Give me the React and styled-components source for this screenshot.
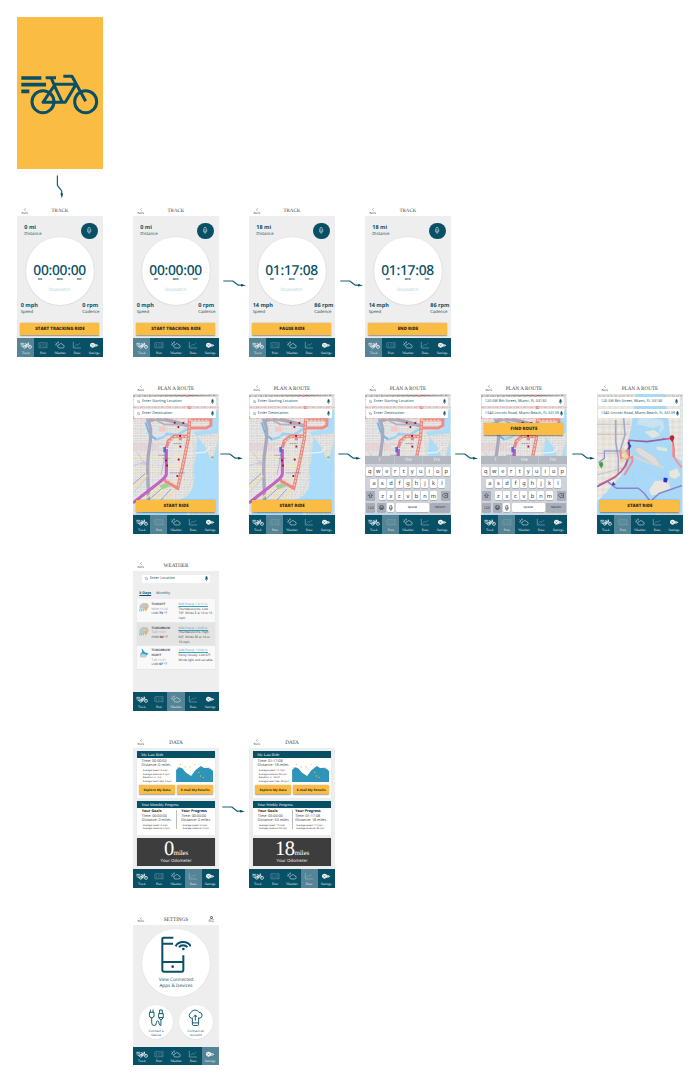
import React from "react";
import styled, { createGlobalStyle } from "styled-components";

const teal = "#085066";
const yellow = "#fbbc43";
const sans = '"Open Sans", "Noto Sans", sans-serif';
const serif = '"Liberation Serif", serif';

const Global = createGlobalStyle`
  body { margin: 0; background: #fff; font-family: ${sans}; color: ${teal}; text-rendering: geometricPrecision; }
  * { box-sizing: border-box; }
  svg { display: block; flex: none; }
`;

/* ---------- board ---------- */
const Board = styled.main`
  width: 697px;
  height: 1082px;
  padding: 17.3px 0 0 17.3px;
  overflow: hidden;
  display: flex;
  flex-direction: column;
  align-items: flex-start;
`;
const Splash = styled.section`
  width: 85.4px;
  height: 151.7px;
  flex: none;
  padding-top: 3px;
  background: ${yellow};
  display: flex;
  align-items: center;
  justify-content: center;
`;
const DownArrow = styled.div`
  width: 85.4px;
  height: 36.3px;
  flex: none;
`;
const FlowRow = styled.section`
  display: flex;
  flex: none;
  height: 151.7px;
  margin-bottom: ${(p) => p.$after ?? 25.3}px;
  margin-left: ${(p) => p.$indent || 0}px;
`;
const Link = styled.div`
  width: 30.6px;
  height: 151.7px;
  padding: ${(p) => p.$y || 74}px 0 0 ${(p) => p.$x || 4}px;
  overflow: visible;
`;

/* ---------- phone ---------- */
const Phone = styled.article`
  width: 85.4px;
  height: 151.7px;
  flex: none;
  display: flex;
  flex-direction: column;
  overflow: hidden;
  background: #fff;
`;
const Header = styled.header`
  height: ${(p) => p.$h || 11}px;
  flex: none;
  display: grid;
  grid-template-columns: 15px 1fr 15px;
  align-items: center;
  font-family: ${serif};
  color: #666;
`;
const Back = styled.span`
  display: flex;
  flex-direction: column;
  align-items: center;
  gap: 0.3px;
  font-size: 3.2px;
  line-height: 3.7px;
  padding-top: 2px;
  color: #333;
`;
const Title = styled.h1`
  margin: 0;
  padding-top: 2.4px;
  font-size: ${(p) => p.$size || 5}px;
  line-height: 7px;
  font-weight: 400;
  text-align: center;
  white-space: nowrap;
  color: #404040;
`;
const Body = styled.div`
  position: relative;
  flex: 1;
  min-height: 0;
  overflow: hidden;
  background: #eeeeee;
  display: flex;
  flex-direction: column;
`;
const Nav = styled.nav`
  height: 18.8px;
  flex: none;
  display: grid;
  grid-template-columns: repeat(5, 1fr);
  background: ${teal};
`;
const NavItem = styled.div`
  display: flex;
  flex-direction: column;
  align-items: center;
  padding-top: 3.2px;
  font: 3.4px/4px ${serif};
  color: #e4edf0;
  background: ${(p) => (p.$on ? "#548495" : "transparent")};
  gap: 1.2px;
`;
const YellowButton = styled.div`
  width: ${(p) => p.$w || 79}px;
  height: ${(p) => p.$h || 12.2}px;
  flex: none;
  display: flex;
  align-items: center;
  justify-content: center;
  padding-top: 0.5px;
  background: ${yellow};
  color: #352c1c;
  border-radius: ${(p) => p.$r || 0.5}px;
  box-shadow: 0 0.3px 1.5px rgba(0, 0, 0, 0.4);
  font-size: ${(p) => p.$size || 4.4}px;
  font-weight: ${(p) => p.$weight || 800};
  white-space: nowrap;
`;

/* ---------- track ---------- */
const TrackTop = styled.div`
  height: 20.7px;
  padding: 6.4px 4.9px 0 7px;
  display: flex;
  justify-content: space-between;
`;
const Stat = styled.div`
  width: ${(p) => p.$w || "auto"};
  white-space: nowrap;
  font-size: 4.3px;
  line-height: 7.6px;
  b { display: block; font-size: 5.5px; line-height: 8px; }
`;
const MicButton = styled.div`
  width: 16.6px;
  height: 16.6px;
  border-radius: 50%;
  background: ${teal};
  display: flex;
  align-items: center;
  justify-content: center;
`;
const Dial = styled.div`
  width: 68px;
  height: 68px;
  margin: 0 0 0 8.3px;
  border-radius: 50%;
  background: #fff;
  box-shadow: 0 0.3px 1.5px rgba(0, 0, 0, 0.18);
  display: flex;
  flex-direction: column;
  align-items: center;
  padding-top: 26.8px;
  flex: none;
`;
const Clock = styled.div`
  font: 500 13.8px/14px "Noto Sans", sans-serif;
  letter-spacing: -0.28px;
  white-space: nowrap;
`;
const Units = styled.div`
  display: grid;
  grid-template-columns: repeat(3, 19.6px);
  text-align: center;
  font-size: 2.8px;
  line-height: 3px;
  font-weight: 700;
  margin-top: 0.4px;
`;
const Caption = styled.div`
  font-size: 4.5px;
  line-height: 6px;
  margin-top: 5.4px;
  color: #b3d2d8;
`;
const TrackBottom = styled.div`
  display: flex;
  padding: 0 0 0 3.4px;
  margin-top: -4.3px;
  height: 22.4px;
`;
const CenterRow = styled.div`
  display: flex;
  justify-content: center;
`;

/* ---------- plan ---------- */
const MapLayer = styled.div`
  position: absolute;
  inset: 0;
`;
const Over = styled.div`
  position: relative;
  flex: 1;
  display: flex;
  flex-direction: column;
  align-items: center;
  padding-top: 3px;
`;
const Search = styled.div`
  width: ${(p) => p.$w || 81.8}px;
  height: ${(p) => p.$h || 9.2}px;
  flex: none;
  align-self: flex-start;
  margin: 0 0 ${(p) => p.$mb ?? 2.8}px 1px;
  padding: 0 2px 0 2.6px;
  display: flex;
  align-items: center;
  gap: 1.4px;
  border-radius: 1.2px;
  background: #fff;
  font-size: 3.75px;
  white-space: nowrap;
  span { flex: 1; }
`;
const Keyboard = styled.div`
  position: absolute;
  left: 0;
  right: 0;
  bottom: 0.9px;
  height: 58.4px;
  background: #ced2d9;
  display: flex;
  flex-direction: column;
  align-items: center;
`;
const Suggest = styled.div`
  width: 100%;
  height: 8.8px;
  display: grid;
  grid-template-columns: repeat(3, 1fr);
  align-items: center;
  text-align: center;
  background: #b2b7c0;
  color: #f3f4f6;
  font: 4.4px/8px "Noto Sans", sans-serif;
  margin-bottom: 2.9px;
  span + span { border-left: 0.3px solid #c0c4cc; }
`;
const KeyRow = styled.div`
  width: 83.4px;
  display: flex;
  justify-content: ${(p) => (p.$spread ? "space-between" : "center")};
  gap: ${(p) => (p.$spread ? 0 : 1.5)}px;
  margin-bottom: 2.9px;
`;
const Keys = styled.div`
  display: flex;
  gap: 1.5px;
`;
const Key = styled.div`
  width: ${(p) => p.$w || 7}px;
  height: 9.3px;
  border-radius: 1px;
  background: ${(p) => (p.$dark ? "#a7adb9" : "#fff")};
  box-shadow: 0 0.4px 0 #8b8f96;
  color: #303030;
  display: flex;
  align-items: center;
  justify-content: center;
  font: ${(p) => p.$size || 5.6}px/8px "Noto Sans", sans-serif;
`;
const BottomAction = styled.div`
  margin-top: auto;
  margin-bottom: 2.9px;
`;
const FindAction = styled.div`
  margin-top: 2.2px;
`;

/* ---------- weather ---------- */
const WeatherSearch = styled.div`
  display: flex;
  padding: 4px 0 0 8px;
`;
const Tabs = styled.div`
  display: flex;
  gap: 4.9px;
  padding-left: 6px;
  font-size: 3.65px;
  line-height: 6px;
  margin: 8px 0 2.1px;
  u { font-weight: 700; }
`;
const Forecasts = styled.div`
  width: 78px;
  margin-left: 4px;
  background: #f9f9f9;
  box-shadow: 0 0.3px 1px rgba(0, 0, 0, 0.15);
`;
const Forecast = styled.div`
  height: ${(p) => p.$h}px;
  display: grid;
  grid-template-columns: 12.3px 26.9px 1fr;
  padding: 2.8px 0 0 2px;
  background: ${(p) => (p.$shade ? "#e4e4e4" : "transparent")};
  border-bottom: 0.5px solid #e8e8e8;
  color: #383838;
  font-size: 3.05px;
  line-height: 4.65px;
  white-space: pre;
  i { font-style: normal; color: #929292; }
`;
const Day = styled.div`
  em { font-style: normal; font-weight: 600; }
`;
const Rain = styled.div`
  font-size: 3.05px;
  u { color: #36a0bd; }
`;

/* ---------- data ---------- */
const Cards = styled.div`
  display: flex;
  flex-direction: column;
  gap: 3.1px;
  padding: 3.4px 3.7px 0 3.9px;
`;
const Card = styled.section`
  height: ${(p) => p.$h}px;
  flex: none;
  background: #fff;
  box-shadow: 0 0.2px 1px rgba(0, 0, 0, 0.2);
`;
const CardTitle = styled.h2`
  margin: 0;
  height: 7.3px;
  padding-left: 4px;
  background: ${teal};
  color: #fff;
  font: 400 4px/7.6px ${serif};
`;
const CardRow = styled.div`
  display: flex;
  justify-content: space-between;
  padding: ${(p) => p.$pad};
`;
const Facts = styled.div`
  color: #333;
  font-size: 3.7px;
  line-height: 4.1px;
  white-space: pre;
  padding-top: 0.5px;
  p { margin: 0; }
  small { display: block; font-size: 2.4px; line-height: 3.4px; padding: 1px 0 0 1.2px; }
  b { color: #222; }
`;
const ChartBox = styled.div`
  padding-top: 2.2px;
`;
const Rule = styled.div`
  width: 0.4px;
  height: 19.5px;
  background: #bdbdbd;
`;
const Odometer = styled.section`
  height: 27.6px;
  flex: none;
  background: #3d3d3d;
  color: #fff;
  box-shadow: 0 0.3px 1px rgba(0, 0, 0, 0.35);
  display: flex;
  flex-direction: column;
  align-items: center;
  padding-top: 4px;
`;
const Miles = styled.div`
  height: 15.5px;
  font: 20.5px/15.5px ${serif};
  letter-spacing: -0.6px;
  small { font-size: 7px; line-height: 0; letter-spacing: -0.1px; }
`;
const OdoLabel = styled.div`
  font-size: 4.3px;
  line-height: 6px;
`;

/* ---------- settings ---------- */
const Bubble = styled.div`
  width: ${(p) => p.$d}px;
  height: ${(p) => p.$d}px;
  flex: none;
  border-radius: 50%;
  background: #fff;
  box-shadow: 0 0.3px 1px rgba(0, 0, 0, 0.13);
  display: flex;
  flex-direction: column;
  align-items: center;
  padding-top: ${(p) => p.$pt}px;
  gap: ${(p) => p.$gap}px;
  text-align: center;
  white-space: pre;
  font-size: ${(p) => p.$size}px;
  line-height: ${(p) => p.$lh}px;
`;
const SettingsTop = styled.div`
  display: flex;
  justify-content: center;
  padding-top: 4.3px;
`;
const Pair = styled.div`
  display: flex;
  justify-content: center;
  gap: 6px;
  margin-top: 8.2px;
`;
const Help = styled.div`
  display: flex;
  flex-direction: column;
  align-items: center;
  padding-top: 1px;
  font-size: 2.9px;
  line-height: 3.3px;
  color: #333;
`;

/* ---------- drawings ---------- */
const Bike = () => (
  <svg width="78" height="42" viewBox="0 0 234 126" fill="none" stroke={teal} strokeWidth="9">
    <path d="M1 12H61M1 32H75M1 52H25" strokeWidth="11" />
    <circle cx="66" cy="83" r="33" />
    <circle cx="194" cy="83" r="33" />
    <path d="M74 11H105M90 11L99 31H163M101 33L66 85H133L166 29M100 35L123 83M127 7H153L194 82" strokeLinejoin="round" />
  </svg>
);
const Connector = () => (
  <svg width="24" height="8" viewBox="0 0 24 8" fill="none" stroke="#176078" strokeWidth="1.2" strokeLinejoin="round">
    <path d="M0.3 2H9.8L15.3 6.2H20" />
    <path d="M18 4.9L23 6.4L18 7.6Z" fill={teal} stroke="none" />
  </svg>
);
const Mic = ({ h = 5, color = teal }) => (
  <svg width={h * 0.6} height={h} viewBox="0 0 12 20" fill="none" stroke={color}>
    <rect x="2.4" y="1" width="7.2" height="11" rx="3" fill={color} stroke="none" />
    <path d="M1 8V10a5 5 0 0 0 10 0V8M6 15V19" strokeWidth="2.4" />
  </svg>
);
const MicOutline = ({ h = 7, color = "#c4d7dd" }) => (
  <svg width={h * 0.6} height={h} viewBox="0 0 12 20" fill="none" stroke={color} strokeWidth="2">
    <rect x="3" y="1" width="6" height="12" rx="3" />
    <path d="M1 7V11a5 5 0 0 0 10 0V7M6 16V20" strokeWidth="1.7" />
  </svg>
);
const Lens = () => (
  <svg width="3.6" height="3.6" viewBox="0 0 12 12" fill="none" stroke="#43798a" strokeWidth="1.5">
    <circle cx="4.6" cy="4.6" r="3.4" />
    <path d="M7 7L11 11" />
  </svg>
);
const navIcons = {
  Track: (
    <g fill="none" stroke="#fff" strokeWidth="1.8">
      <path d="M1 6H10M1 10H11M4 14H8" />
      <circle cx="12.5" cy="15" r="3.6" />
      <circle cx="26" cy="15" r="4" />
      <path d="M12 7H16L18 15H12L17 8H22L26 15M20 5H23L18 15" />
    </g>
  ),
  Plan: (
    <g fill="none" stroke="#8eb0bb" strokeWidth="1.2">
      <path d="M5 5L11 4L19 5L26 4V18L19 17L11 18L5 17Z" />
      <path d="M8 9L11 11M14 8L17 11M22 8L19 11M8 14L11 13M14 14L17 13M20 15L24 12" />
    </g>
  ),
  Weather: (
    <g fill="none" stroke="#eaf1f3" strokeWidth="1.4">
      <path d="M13 18H22a4 4 0 0 0 1-8a5 5 0 0 0-9-1a4.6 4.6 0 0 0-1 9Z" />
      <path d="M8 12A4 4 0 0 1 13 5M11 1V3M4 4L6 6M3 10H5" />
    </g>
  ),
  Data: (
    <g fill="none" stroke="#b2c9d1" strokeWidth="1.3">
      <path d="M6 2V18H26" />
      <path d="M9 14L14 9L18 11L24 5" strokeDasharray="3 1" />
    </g>
  ),
  Settings: (
    <g fill="#fff">
      <circle cx="12" cy="11" r="6.5" />
      <path d="M17 8H22L27 11L22 14H17Z" />
      <g fill="none" stroke={teal} strokeWidth="1.1">
        <path d="M8.5 8L15 14M8.5 14L15 8M18 11H24" />
      </g>
    </g>
  ),
};
const NavBar = ({ active }) => (
  <Nav>
    {Object.keys(navIcons).map((name) => (
      <NavItem key={name} $on={name === active}>
        <svg width="11.5" height="8.2" viewBox="0 0 30 21">{navIcons[name]}</svg>
        {name}
      </NavItem>
    ))}
  </Nav>
);

const Screen = ({ title, size, active, headH, right, children }) => (
  <Phone>
    <Header $h={headH}>
      <Back>
        <svg width="2" height="3" viewBox="0 0 6 9" fill="none" stroke="#555" strokeWidth="1.4"><path d="M4.5 1L1.5 4.5L4.5 8" /></svg>
        Back
      </Back>
      <Title $size={size}>{title}</Title>
      {right}
    </Header>
    <Body>{children}</Body>
    <NavBar active={active} />
  </Phone>
);

const Track = ({ miles, time, mph, rpm, action }) => (
  <Screen title="TRACK" size={5} active="Track">
    <TrackTop>
      <Stat><b>{miles} mi</b>Distance</Stat>
      <MicButton><MicOutline /></MicButton>
    </TrackTop>
    <Dial>
      <Clock>{time}</Clock>
      <Units><span>HR</span><span>MIN</span><span>SEC</span></Units>
      <Caption>Stopwatch</Caption>
    </Dial>
    <TrackBottom>
      <Stat $w="61.6px"><b>{mph} mph</b>Speed</Stat>
      <Stat><b>{rpm} rpm</b>Cadence</Stat>
    </TrackBottom>
    <CenterRow><YellowButton>{action}</YellowButton></CenterRow>
  </Screen>
);

const dots = [[149, 133], [175, 134], [160, 146], [165, 173], [166, 205], [161, 244], [123, 247], [126, 262], [157, 293]];
const CityMap = () => (
  <svg width="100%" height="100%" viewBox="24 47 256 364" preserveAspectRatio="none">
    <defs>
      <pattern id="streets" width="26" height="22" patternUnits="userSpaceOnUse">
        <rect width="26" height="22" fill="#dcdad9" />
        <path d="M0 1H26M0 7H26M0 15H26" stroke="#f5f3f1" strokeWidth="1.7" />
        <path d="M2 0V22M9 0V22M17 0V22" stroke="#efedec" strokeWidth="1.6" />
        <path d="M4 4H7M10 11H14M19 4H23M3 19H8M20 18H24" stroke="#c0bdc0" strokeWidth="2" />
        <path d="M12 3H15M4 10V13" stroke="#c9d8c2" strokeWidth="2" />
      </pattern>
    </defs>
    <rect x="24" y="47" width="256" height="364" fill="url(#streets)" />
    <path d="M262 120L259 153L205 160L217 178L210 245L204 275L208 300L203 330L188 352L160 368L112 382L24 411H280V90Z" fill="#abdcf9" />
    <path d="M62 132L74 170L93 183L112 178L126 166L158 170L190 150" fill="none" stroke="#9fd2f0" strokeWidth="8" />
    <path d="M62 132L74 170L93 183" fill="none" stroke="#69a8e6" strokeWidth="3" />
    <path d="M214 172L280 166V182L262 247L256 240L240 204Z" fill="url(#streets)" stroke="#dcd9cc" strokeWidth="2" />
    <path d="M186 226L240 222L256 205" fill="none" stroke="#e8eef2" strokeWidth="4" />
    <path d="M200 186L210 200L202 300L182 348" fill="none" stroke="#d5dccf" strokeWidth="3" />
    <path d="M90 150C110 130 126 150 118 172L98 178Z" fill="#dbe3ea" />
    <path d="M102 145H122V160H102ZM50 250H62V262H50Z" fill="#f4c9c4" />
    <path d="M24 198H118M24 213H120M24 205H100" stroke="#f0b9bd" strokeWidth="2.5" strokeDasharray="6 2" />
    <path d="M24 236H122M130 262H180M24 282L120 272M134 236H178M152 180V330" stroke="#f7e9a5" strokeWidth="3" />
    <path d="M66 120C84 150 76 190 70 230C64 280 72 330 70 372" fill="none" stroke="#a9a9bd" strokeWidth="10" />
    <path d="M70 270L36 222M72 290L24 345M24 262L68 250" fill="none" stroke="#b1bedf" strokeWidth="2" />
    <path d="M70 128C105 112 140 130 196 144" fill="none" stroke="#a9a9b9" strokeWidth="11" />
    <path d="M24 116H74L118 138L190 140" fill="none" stroke="#b7b0bd" strokeWidth="5" />
    <path d="M86 372L128 324M50 372L116 312M118 376L150 335M24 330L66 292" stroke="#f2e199" strokeWidth="4" />
    <path d="M64 372L122 320M100 374L138 332M24 318L60 286" stroke="#8f93b4" strokeWidth="2.5" />
    <path d="M104 322L122 314L136 324L110 334Z" fill="#9ed09a" />
    <path d="M108 290L118 240V215" stroke="#b9b2e0" strokeWidth="3" fill="none" />
    <path d="M24 53H200L280 51" stroke="#a8a09e" strokeWidth="4" strokeDasharray="7 4 2 3" />
    <path d="M186 50C196 90 194 100 196 122" stroke="#ea9296" strokeWidth="9" fill="none" />
    <path d="M192 124H258L257 142L244 149H196" fill="none" stroke="#ec8d8b" strokeWidth="9" />
    <path d="M24 87H280M24 121H200" stroke="#f1b6b1" strokeWidth="4" strokeDasharray="9 5 3 4" />
    <path d="M194 122L190 180L176 250L158 330L118 306M124 208L130 188L148 174L190 174M166 174V186" fill="none" stroke="#e98789" strokeWidth="10" />
    <path d="M194 122L190 180L176 250L158 328M196 126H252M124 304L154 322M130 190L150 175H186" fill="none" stroke="#f5d0a2" strokeWidth="3.5" strokeDasharray="7 4" />
    <path d="M124 212V286C124 300 108 306 96 318L24 374" fill="none" stroke="#b65fbd" strokeWidth="9" />
    <path d="M124 262V286C124 300 108 306 96 318L24 374" fill="none" stroke="#d068ce" strokeWidth="3" />
    <path d="M119 206V222" stroke="#5a6cdc" strokeWidth="8" />
    <path d="M114 241H133M136 284H178M146 196H170M100 231H120" stroke="#806f83" strokeWidth="2" strokeDasharray="4 1.5" />
    {dots.map(([x, y]) => <rect key={`${x}-${y}`} x={x - 3} y={y - 3} width="6" height="6" rx="2" fill="#a51536" />)}
    <path d="M185 407H280" stroke="#dbe3e2" strokeWidth="8" />
    <path d="M196 407H278" stroke="#a3b1ba" strokeWidth="2.5" strokeDasharray="5 2" />
    <circle cx="262" cy="237" r="4" fill="#91bf87" />
  </svg>
);
const BayMap = () => (
  <svg width="100%" height="100%" viewBox="90 47 256 364" preserveAspectRatio="none">
    <defs>
      <pattern id="blocks" width="19" height="17" patternUnits="userSpaceOnUse">
        <rect width="19" height="17" fill="#e6e2dd" />
        <path d="M0 3H19M5 0V17" stroke="#f5f2ec" strokeWidth="2" />
        <path d="M0 11H19M13 0V17" stroke="#d9d5d2" strokeWidth="1.3" />
      </pattern>
    </defs>
    <rect x="90" y="47" width="256" height="364" fill="#aad9f7" />
    <path d="M90 47H205L195 130L186 180L190 230L168 285L120 340L90 370Z" fill="url(#blocks)" />
    <path d="M292 47H346V250L322 235L310 180L304 125Z" fill="url(#blocks)" />
    <path d="M215 120L250 118L288 127L292 150L275 168L280 140L260 150L210 138Z" fill="#c9e2ee" />
    <path d="M232 160L262 155L280 170L256 180ZM268 205L300 209V220L270 215Z" fill="#dfe6dc" />
    <path d="M203 211L218 207L264 236L282 265L260 258L212 226Z" fill="#dbdfdc" stroke="#efb9bb" strokeWidth="2" />
    <path d="M188 230L240 252L290 268" stroke="#dbd8ce" strokeWidth="5" fill="none" />
    <path d="M306 280L330 270L340 290L324 302L308 295ZM246 335L264 308L304 306L310 330L284 345L254 352Z" fill="#e9e7dd" />
    <path d="M206 330L196 290L228 263L280 300L316 324" fill="none" stroke="#9dbce4" strokeWidth="1.2" strokeDasharray="3 2" />
    <path d="M90 168H180M90 138H190M90 225H180M90 290L165 270" stroke="#c4c0c9" strokeWidth="3" />
    <path d="M90 172H180M115 120V290M134 120V306" stroke="#f2e3a6" strokeWidth="2" />
    <path d="M146 125V190L154 240V290M170 120L174 170L160 215" stroke="#a5a9c6" strokeWidth="5" fill="none" />
    <path d="M94 254L112 240V218H178L190 200" stroke="#7684d4" strokeWidth="3" fill="none" />
    <path d="M90 325C140 300 158 292 176 262L186 232V186L240 190L312 180" stroke="#9263a0" strokeWidth="5" fill="none" />
    <path d="M96 319C142 298 158 290 172 264L184 236V188M286 180L314 182" stroke="#da6787" strokeWidth="3" fill="none" />
    <path d="M160 220H182V240H162ZM168 244L196 236V250L172 290" fill="none" stroke="#ed8e94" strokeWidth="6" />
    <path d="M165 210L180 235L160 250" fill="none" stroke="#e6d7a0" strokeWidth="8" />
    <path d="M318 184V232L330 250L344 268" stroke="#ef969f" strokeWidth="6" fill="none" />
    <path d="M316 187L322 210V236" stroke="#e0546a" strokeWidth="2" fill="none" />
    <path d="M122 310L148 330H214L232 346L250 370L276 346L345 322" stroke="#8986cf" strokeWidth="4.5" fill="none" strokeLinejoin="round" />
    <path d="M94 53H198M290 53H346" stroke="#9b9492" strokeWidth="2" strokeDasharray="9 3" />
    <path d="M183 192L190 204L184 212" stroke="#3d3bb9" strokeWidth="5" fill="none" />
    <path d="M290 298L302 300L300 313L289 311Z" fill="#3028e0" />
    <path d="M138 310L146 320L134 322Z" fill="#3e36b8" />
    <path d="M96 258a6 6 0 0 1 13 0c0 5-6 10-6 14c0-4-7-9-7-14Z" fill="#3da63f" />
    <path d="M308 178a7 7 0 0 1 14 0c0 6-7 10-7 16c0-6-7-10-7-16Z" fill="#bf2535" />
    <path d="M268 407H343" stroke="#dbe3e2" strokeWidth="8" />
    <path d="M272 407H340" stroke="#a3b1ba" strokeWidth="2.5" strokeDasharray="5 2" />
  </svg>
);

const PhoneKeys = () => (
  <Keyboard>
    <Suggest><span>I</span><span>the</span><span>I'm</span></Suggest>
    <KeyRow>{[..."qwertyuiop"].map((k) => <Key key={k}>{k}</Key>)}</KeyRow>
    <KeyRow>{[..."asdfghjkl"].map((k) => <Key key={k}>{k}</Key>)}</KeyRow>
    <KeyRow $spread>
      <Key $w={9} $dark>
        <svg width="5" height="5" viewBox="0 0 12 12" fill="none" stroke="#333" strokeWidth="1.2"><path d="M6 1L11 6H8V11H4V6H1Z" /></svg>
      </Key>
      <Keys>{[..."zxcvbnm"].map((k) => <Key key={k}>{k}</Key>)}</Keys>
      <Key $w={9} $dark>
        <svg width="6" height="5" viewBox="0 0 14 12" fill="none" stroke="#333" strokeWidth="1.2"><path d="M5 1H13V11H5L1 6ZM7 4L11 8M11 4L7 8" /></svg>
      </Key>
    </KeyRow>
    <KeyRow $spread>
      <Key $w={9} $dark $size={3.4}>123</Key>
      <Key $w={9} $dark>
        <svg width="5" height="5" viewBox="0 0 12 12" fill="none" stroke="#222" strokeWidth="1.3"><circle cx="6" cy="6" r="5" /><path d="M3 7C4 10 8 10 9 7ZM4 4V5M8 4V5" /></svg>
      </Key>
      <Key $w={7}><MicOutline h={6} color="#333" /></Key>
      <Key $w={33.2} $size={3.5}>space</Key>
      <Key $w={19.2} $dark $size={3.5}>return</Key>
    </KeyRow>
  </Keyboard>
);

const Plan = ({ filled, keys, find, start, bay }) => (
  <Screen title="PLAN A ROUTE" size={5.2} active="Plan" headH={11.7}>
    <MapLayer>{bay ? <BayMap /> : <CityMap />}</MapLayer>
    <Over>
      <Search>
        {!filled && <Lens />}
        <span>{filled ? "120 SW 8th Street, Miami, FL 33130" : "Enter Starting Location"}</span>
        <Mic />
      </Search>
      <Search>
        {!filled && <Lens />}
        <span>{filled ? "1340 Lincoln Road, Miami Beach, FL 33139" : "Enter Destination"}</span>
        <Mic />
      </Search>
      {find && <FindAction><YellowButton>FIND ROUTE</YellowButton></FindAction>}
      {start && <BottomAction><YellowButton>START RIDE</YellowButton></BottomAction>}
    </Over>
    {keys && <PhoneKeys />}
  </Screen>
);

const Storm = () => (
  <svg width="10.4" height="10.4" viewBox="0 0 31 31">
    <circle cx="21" cy="10" r="7" fill="#f6c269" />
    <path d="M5 19a6 6 0 0 1 1-11a8 8 0 0 1 14 0a6 6 0 0 1 5 11Z" fill="#c4c7ca" stroke="#9d9fa1" strokeWidth="0.8" />
    <path d="M4 19L2 28M9 20L7 28M14 20L12 28" stroke="#5db5df" strokeWidth="2.6" />
    <path d="M20 15L15 23H20L17 30L27 20H21L24 15Z" fill="#f6a633" />
  </svg>
);
const Night = () => (
  <svg width="10.4" height="10.4" viewBox="0 0 31 31">
    <path d="M8 2C14 3 12 14 28 16C24 27 8 27 3 18C10 16 10 9 8 2Z" fill="#2e9fcb" />
    <path d="M6 28a4 4 0 0 1 0-8a6 6 0 0 1 10-1a4 4 0 0 1 4 9Z" fill="#c3cdd2" />
  </svg>
);
const Weather = () => (
  <Screen title="WEATHER" size={5.2} active="Weather" headH={11.7}>
    <WeatherSearch>
      <Search $w={68.2} $h={8.4} $mb={0}><Lens /><span>Enter Location</span><Mic /></Search>
    </WeatherSearch>
    <Tabs><u>5 Days</u><span>Monthly</span></Tabs>
    <Forecasts>
      <Forecast $h={23.7}>
        <Storm />
        <Day><em>TONIGHT</em>{"\n"}<i>MON 11/20</i>{"\n"}LOW <b>73</b> ° F</Day>
        <Rain><u>60% Precip. / 0.11 in.</u>{"\n"}Thunderstorms. Low{"\n"}73F. Winds E at 10 to 15{"\n"}mph.</Rain>
      </Forecast>
      <Forecast $h={22.7} $shade>
        <Storm />
        <Day><em>TOMORROW</em>{"\n"}<i>TUE 11/21</i>{"\n"}HIGH <b>82</b> ° F</Day>
        <Rain><u>60% Precip. / 0.08 in.</u>{"\n"}Thunderstorms. High{"\n"}82F. Winds SE at 10 to{"\n"}15 mph.</Rain>
      </Forecast>
      <Forecast $h={24.4}>
        <Night />
        <Day><em>TOMORROW{"\n"}NIGHT</em>{"\n"}<i>TUE 11/21</i>{"\n"}LOW <b>67</b> ° F</Day>
        <Rain><u>20% Precip. / 0.00 in.</u>{"\n"}Partly Cloudy. Low 67F.{"\n"}Winds light and variable.</Rain>
      </Forecast>
    </Forecasts>
  </Screen>
);

const Chart = () => (
  <svg width="37.2" height="21" viewBox="0 0 111 63">
    <path d="M0 24L9 16L18 19L30 32L45 42L58 25L74 12L84 18L100 17L111 27V60H0Z" fill="#2e94b9" />
    {[[4, 18], [13, 7], [27, 15], [42, 15], [57, 7], [68, 31], [81, 46], [73, 42], [100, 20]].map(([x, y]) => (
      <circle key={x} cx={x} cy={y} r="1.9" fill="#eac64c" />
    ))}
  </svg>
);
const Data = ({ time, miles, mph, rpm, period, goalTime, goalMiles, goalMph, goalRpm, rate, elev }) => (
  <Screen title="DATA" size={5.3} active="Data" headH={11.4}>
    <Cards>
      <Card $h={46.8}>
        <CardTitle>My Last Ride</CardTitle>
        <CardRow $pad="1.5px 1.8px 0 4.4px">
          <Facts>
            <p>Time: {time}</p><p>Distance: {miles} miles</p>
            <small>{`Average speed: ${mph} mph\nAverage cadence: ${rpm} rpm\nElevation +/-: ${elev}\nAverage heart rate: ${rate} bpm`}</small>
          </Facts>
          <ChartBox><Chart /></ChartBox>
        </CardRow>
        <CardRow $pad="2px 2px 0 2.2px">
          <YellowButton $w={35.2} $h={9} $size={3.3} $weight={700} $r={1}>Explore My Data</YellowButton>
          <YellowButton $w={35.6} $h={9} $size={3.3} $weight={700} $r={1}>E-mail My Results</YellowButton>
        </CardRow>
      </Card>
      <Card $h={34.3}>
        <CardTitle>Your {period} Progress</CardTitle>
        <CardRow $pad="1.9px 4.8px 0 4.6px">
          <Facts>
            <p><b>Your Goals</b></p><p>Time: {goalTime}</p><p>Distance: {goalMiles} miles</p>
            <small>{`Average speed: ${goalMph} mph\nAverage cadence: ${goalRpm} rpm`}</small>
          </Facts>
          <Rule />
          <Facts>
            <p><b>Your Progress</b></p><p>Time: {time}</p><p>Distance: {miles} miles</p>
            <small>{`Average speed: ${mph} mph\nAverage cadence: ${rpm} rpm`}</small>
          </Facts>
        </CardRow>
      </Card>
      <Odometer>
        <Miles>{miles}<small>miles</small></Miles>
        <OdoLabel>Your Odometer</OdoLabel>
      </Odometer>
    </Cards>
  </Screen>
);

const Settings = () => (
  <Screen
    title="SETTINGS"
    size={5.2}
    active="Settings"
    headH={11.2}
    right={
      <Help>
        <svg width="5" height="4" viewBox="0 0 15 12" fill="none" stroke="#333" strokeWidth="2"><circle cx="7.5" cy="4" r="3" /><path d="M2 11C3 7 12 7 13 11" /></svg>
        Help
      </Help>
    }
  >
    <SettingsTop>
      <Bubble $d={68} $pt={6.6} $gap={4.2} $size={4.65} $lh={6.2}>
        <svg width="30" height="37" viewBox="0 0 90 111" fill="none" stroke={teal} strokeWidth="6">
          <path d="M37 5H7Q4 5 4 8V102Q4 107 9 107H62Q67 107 67 102V58M4 23H36M4 78H67" />
          <circle cx="35" cy="92" r="4" fill={teal} stroke="none" />
          <path d="M44 31A24 20 0 0 1 89 31M54 34A14 11 0 0 1 79 34" />
          <circle cx="67" cy="39" r="4" fill={teal} stroke="none" />
        </svg>
        {"View Connected\nApps & Devices"}
      </Bubble>
    </SettingsTop>
    <Pair>
      <Bubble $d={33.8} $pt={4.2} $gap={1.6} $size={3.15} $lh={4.2}>
        <svg width="16" height="17.5" viewBox="0 0 48 53" fill="none" stroke={teal} strokeWidth="2.8">
          <path d="M4 10H18V21Q18 26 11 26Q4 26 4 21ZM7 10V2M15 10V2" />
          <path d="M32 14H46V26H32ZM35 14V3H43V14M33 26Q34 32 39 32Q44 32 45 26" />
          <path d="M11 26V42Q11 50 18 50Q25 50 25 42Q25 36 29 36Q33 36 33 42Q33 50 39 50V32" />
        </svg>
        {"Connect a\nDevice"}
      </Bubble>
      <Bubble $d={33.8} $pt={4.2} $gap={1.6} $size={3.15} $lh={4.2}>
        <svg width="15" height="17.5" viewBox="0 0 45 53" fill="none" stroke={teal} strokeWidth="2.8">
          <path d="M12 28H10A9 9 0 0 1 9 11A13 12 0 0 1 33 10A9 9 0 0 1 34 28H31" />
          <path d="M13 26V46Q13 50 17 50H28Q32 50 32 46V26M13 42H32M22 35V19M17 24L22 18L27 24" />
        </svg>
        {"Connect an\nAccount"}
      </Bubble>
    </Pair>
  </Screen>
);

export default function App() {
  return (
    <>
      <Global />
      <Board>
        <Splash><Bike /></Splash>
        <DownArrow>
          <svg width="85.4" height="36.3" viewBox="0 0 85.4 36.3" fill="none" stroke="#176078" strokeWidth="1.2" strokeLinejoin="round">
            <path d="M40.4 6.5V16.3L44.7 21.8V27" />
            <path d="M43.4 24.2H46L44.9 29.4Z" fill={teal} stroke="none" />
          </svg>
        </DownArrow>
        <FlowRow $after={25.1}>
          <Track miles={0} time="00:00:00" mph={0} rpm={0} action="START TRACKING RIDE" />
          <Link />
          <Track miles={0} time="00:00:00" mph={0} rpm={0} action="START TRACKING RIDE" />
          <Link $x={4.7}><Connector /></Link>
          <Track miles={18} time="01:17:08" mph={14} rpm={86} action="PAUSE RIDE" />
          <Link $x={5.4}><Connector /></Link>
          <Track miles={18} time="01:17:08" mph={14} rpm={86} action="END RIDE" />
        </FlowRow>
        <FlowRow $indent={116}>
          <Plan start />
          <Link $y={70.4} $x={1.2}><Connector /></Link>
          <Plan start />
          <Link $y={70.4} $x={3}><Connector /></Link>
          <Plan keys />
          <Link $y={70.4} $x={3.9}><Connector /></Link>
          <Plan filled keys find />
          <Link $y={70.4} $x={5.4}><Connector /></Link>
          <Plan filled start bay />
        </FlowRow>
        <FlowRow $indent={116} $after={25.4}><Weather /></FlowRow>
        <FlowRow $indent={116} $after={25.8}>
          <Data time="00:00:00" miles={0} mph={0} rpm={0} period="Monthly" goalTime="00:00:00" goalMiles={0} goalMph={0} goalRpm={0} rate={0} elev="0.0" />
          <Link $y={68.6} $x={3}><Connector /></Link>
          <Data time="01:17:08" miles={18} mph={14} rpm={86} period="Weekly" goalTime="05:00:00" goalMiles={50} goalMph={12} goalRpm={80} rate={98} elev="26.24" />
        </FlowRow>
        <FlowRow $indent={116} $after={0}><Settings /></FlowRow>
      </Board>
    </>
  );
}
